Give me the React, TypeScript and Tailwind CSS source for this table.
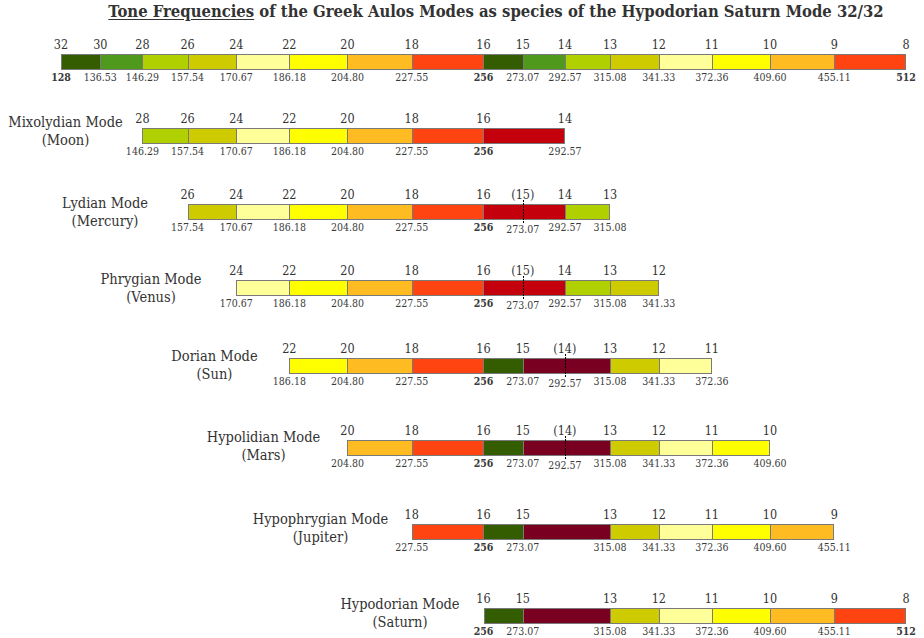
import React from "react";

const X0 = 61;
const OCT = 422.5;
const xOf = (n: number) => X0 + OCT * Math.log2(32 / n);

const FREQ: Record<number, string> = {
  32: "128", 30: "136.53", 28: "146.29", 26: "157.54", 24: "170.67", 22: "186.18",
  20: "204.80", 18: "227.55", 16: "256", 15: "273.07", 14: "292.57", 13: "315.08",
  12: "341.33", 11: "372.36", 10: "409.60", 9: "455.11", 8: "512",
};

const COLOR: Record<number, string> = {
  32: "#345c00", 30: "#4f9a1c", 28: "#b0d000", 26: "#cecb00", 24: "#ffff99", 22: "#ffff00",
  20: "#ffbb22", 18: "#ff4411", 16: "#345c00", 15: "#4f9a1c", 14: "#b0d000", 13: "#cecb00",
  12: "#ffff99", 11: "#ffff00", 10: "#ffbb22", 9: "#ff4411",
};

const BOLD = new Set([32, 16, 8]);

const cellColor = (a: number, b: number) => {
  if (a === 16 && b === 14) return "#c4000c";
  if (a === 15 && b === 13) return "#7a0022";
  return COLOR[a];
};

type Mode = {
  lines?: [string, string];
  cx?: number;
  dy?: number;
  mt: number;
  nodes: number[];
  dashed?: number[];
};

const MODES: Mode[] = [
  { mt: 30, nodes: [32, 30, 28, 26, 24, 22, 20, 18, 16, 15, 14, 13, 12, 11, 10, 9, 8] },
  { lines: ["Mixolydian Mode", "(Moon)"], cx: 65.5, dy: -5, mt: 58, nodes: [28, 26, 24, 22, 20, 18, 16, 14] },
  { lines: ["Lydian Mode", "(Mercury)"], cx: 105, dy: 0, mt: 60, nodes: [26, 24, 22, 20, 18, 16, 15, 14, 13], dashed: [15] },
  { lines: ["Phrygian Mode", "(Venus)"], cx: 151, dy: 0, mt: 60, nodes: [24, 22, 20, 18, 16, 15, 14, 13, 12], dashed: [15] },
  { lines: ["Dorian Mode", "(Sun)"], cx: 214.5, dy: -1.5, mt: 62, nodes: [22, 20, 18, 16, 15, 14, 13, 12, 11], dashed: [14] },
  { lines: ["Hypolidian Mode", "(Mars)"], cx: 263.5, dy: -2, mt: 66, nodes: [20, 18, 16, 15, 14, 13, 12, 11, 10], dashed: [14] },
  { lines: ["Hypophrygian Mode", "(Jupiter)"], cx: 320.5, dy: -4, mt: 68, nodes: [18, 16, 15, 13, 12, 11, 10, 9] },
  { lines: ["Hypodorian Mode", "(Saturn)"], cx: 400, dy: -3, mt: 68, nodes: [16, 15, 13, 12, 11, 10, 9, 8] },
];

function Row({ m }: { m: Mode }) {
  const dashed = new Set(m.dashed ?? []);
  const start = xOf(m.nodes[0]);
  const end = xOf(m.nodes[m.nodes.length - 1]);
  const solid = m.nodes.filter((n) => !dashed.has(n));
  const cells: { a: number; b: number }[] = [];
  for (let i = 0; i < solid.length - 1; i++) cells.push({ a: solid[i], b: solid[i + 1] });

  return (
    <div className="flex h-[16px] shrink-0" style={{ marginTop: m.mt }}>
      <div className="flex shrink-0 items-center" style={{ width: start }}>
        {m.lines && (
          <div
            className="shrink-0 whitespace-nowrap text-center text-[14.5px] leading-[18px] text-[#333]"
            style={{ width: (m.cx ?? 0) * 2, marginTop: (m.dy ?? 0) * 2 }}
          >
            <div>{m.lines[0]}</div>
            <div>{m.lines[1]}</div>
          </div>
        )}
      </div>
      <div
        className="relative flex h-[16px] shrink-0 border border-[#7a7a7a]"
        style={{ width: end - start }}
      >
        {cells.map((c, i) => (
          <div
            key={i}
            className={i === 0 ? "h-full" : "h-full border-l border-[#7a7a7a]"}
            style={{
              width: i === cells.length - 1 ? undefined : xOf(c.b) - xOf(c.a) - (i === 0 ? 1 : 0),
              flex: i === cells.length - 1 ? "1 1 0%" : "none",
              backgroundColor: cellColor(c.a, c.b),
            }}
          />
        ))}
        {m.nodes.map((n) => {
          const left = xOf(n) - start - 1;
          const isD = dashed.has(n);
          return (
            <React.Fragment key={n}>
              <div
                className="absolute top-[-17px] -translate-x-1/2 whitespace-nowrap text-[12.5px] leading-[14px] text-[#333]"
                style={{ left }}
              >
                {isD ? `(${n})` : n}
              </div>
              <div
                className={
                  "absolute -translate-x-1/2 whitespace-nowrap text-[10.5px] leading-[12px] text-[#3a3a3a] " +
                  (isD ? "top-[18px] " : "top-[16px] ") +
                  (BOLD.has(n) ? "font-bold" : "")
                }
                style={{ left }}
              >
                {FREQ[n]}
              </div>
              {isD && (
                <div
                  className="absolute top-[-5px] bottom-[-4px] w-px bg-[repeating-linear-gradient(to_bottom,#000_0px,#000_2px,transparent_2px,transparent_3px)]"
                  style={{ left }}
                />
              )}
            </React.Fragment>
          );
        })}
      </div>
    </div>
  );
}

export default function App() {
  return (
    <div className="flex h-[638px] w-[924px] flex-col overflow-hidden bg-white font-['DejaVu_Serif_Condensed','DejaVu_Serif',serif] text-[#333]">
      <div className="shrink-0 pl-[68px] text-center text-[16.5px] font-bold leading-[24px] text-[#333]">
        <span className="underline decoration-1 underline-offset-[2px]">Tone Frequencies</span> of the Greek Aulos
        Modes as species of the Hypodorian Saturn Mode 32/32
      </div>
      {MODES.map((m, i) => (
        <Row key={i} m={m} />
      ))}
    </div>
  );
}
